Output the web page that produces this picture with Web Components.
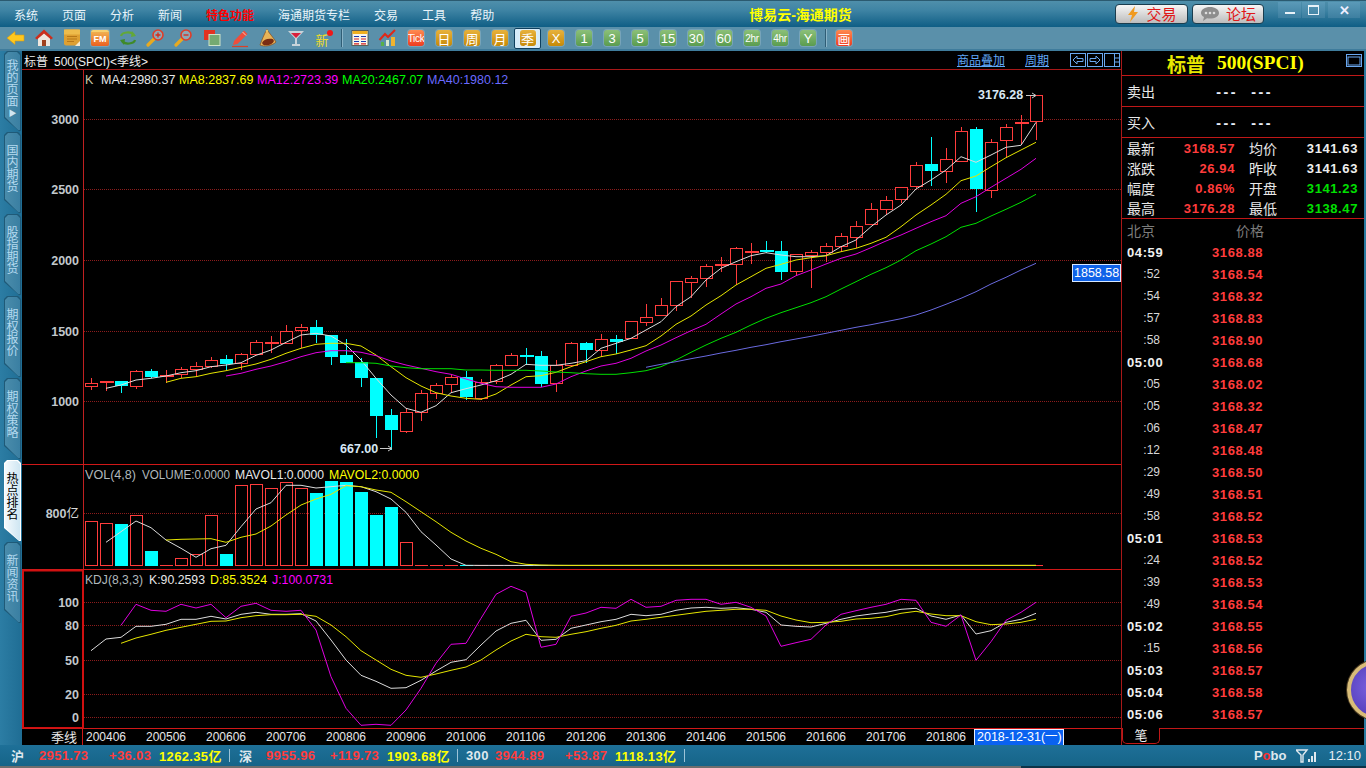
<!DOCTYPE html>
<html lang="zh"><head><meta charset="utf-8"><title>博易云</title>
<style>
html,body{margin:0;padding:0;background:#000;overflow:hidden}
body{font-family:"Liberation Sans","Noto Sans CJK SC",sans-serif}
</style></head><body>
<x-app></x-app>
<script>
const CJK='"Noto Sans CJK SC"';
const SANS='"Liberation Sans","Noto Sans CJK SC",sans-serif';
const MONO='"DejaVu Sans Mono","Noto Sans CJK SC",monospace';
const NUM=`font:700 13px ${SANS};letter-spacing:.6px`;
function def(name,css,html){
  customElements.define(name,class extends HTMLElement{
    connectedCallback(){
      if(this.shadowRoot)return;
      const r=this.attachShadow({mode:'open'});
      const h=typeof html==='function'?html(this):html;
      r.innerHTML='<style>'+css+'</style>'+h;
    }
  });
}

/* ---------- title bar ---------- */
const bolt='<svg width="14" height="16" viewBox="0 0 14 16"><path d="M9 0 L2 9 H6 L4 16 L12 6 H8 Z" fill="#f09a20"/></svg>';
const bubble='<svg width="20" height="16" viewBox="0 0 20 16"><path d="M10 1 C15 1 19 3.500 19 7 C19 10.500 15 12.500 10 12.500 C9 12.500 8 12.400 7 12.200 L3 15 L4 11 C2 10 1 8.500 1 7 C1 3.500 5 1 10 1Z" fill="#8d8d8d"/><circle cx="6" cy="7" r="1.300" fill="#ddd"/><circle cx="10" cy="7" r="1.300" fill="#ddd"/><circle cx="14" cy="7" r="1.300" fill="#ddd"/></svg>';
def('x-titlebar',`
:host{display:flex;align-items:center;height:27px;box-sizing:border-box;border-top:1px solid #2b5a70;
 background:linear-gradient(#4f8fab,#3f84a4 35%,#0f5e85);font:12px ${SANS};color:#e8f4fa;padding-left:14px;flex:none}
nav{display:flex;gap:24px}
nav span{white-space:nowrap}
.hot{color:#f00;font-weight:700}
.ttl{margin-left:255px;color:#ff0;font:700 14px ${SANS};white-space:nowrap;width:112px}
.right{margin-left:auto;display:flex;align-items:flex-start;height:100%}
.btn{width:73px;height:20px;margin:3px 4px 0 0;box-sizing:border-box;border:1px solid #1b3d4e;border-radius:4px;
 background:linear-gradient(#f6f6f6,#bcbcbc);display:flex;align-items:center;justify-content:center;gap:6px;color:#e01818;font:15px ${CJK};line-height:18px}
.win{width:23px;height:16px;margin:1px 0 0 1px;background:linear-gradient(#5b9ab8,#3d7fa0);display:flex;align-items:center;justify-content:center;color:#eef;}
.win.first{margin-left:14px}
.win.x{width:32px;margin-left:3px;margin-right:6px;font:700 13px ${SANS}}
.min{width:10px;height:2px;background:#e8f2f8;margin-top:6px}
.max{width:9px;height:7px;border:1px solid #e8f2f8;border-top-width:2px}
`,`<nav><span>系统</span><span>页面</span><span>分析</span><span>新闻</span><span class="hot">特色功能</span><span>海通期货专栏</span><span>交易</span><span>工具</span><span>帮助</span></nav>
<div class="ttl">博易云-海通期货</div>
<div class="right"><div class="btn">${bolt}<span>交易</span></div><div class="btn" style="margin-right:0;width:72px">${bubble}<span>论坛</span></div>
<div class="win first"><i class="min"></i></div><div class="win"><i class="max"></i></div><div class="win x">✕</div></div>`);

/* ---------- toolbar ---------- */
const icons={
 back:'<path d="M1 10 L9 3.500 V7 H18 V13 H9 V16.500Z" fill="#ffc81e" stroke="#d99a10" stroke-width=".6"/>',
 home:'<path d="M4 10 L10 5 L16 10 V18 H4Z" fill="#efe6de"/><rect x="8" y="12" width="4" height="6" fill="#a0401e"/><path d="M10 1.500 L1 10 L3 11.500 L10 5.500 L17 11.500 L19 10Z" fill="#cc2e1c"/>',
 book:'<rect x="2" y="1.500" width="16" height="16" rx="2" fill="#dea032"/><rect x="2" y="1.500" width="16" height="5" fill="#eebc4c"/><path d="M5 8.500H15M5 11H15M5 13.500H12" stroke="#b87818" stroke-width="1"/><path d="M13 18 L18 13 V18Z" fill="#f4ead0"/>',
 recycle:'<path d="M3 8 C4 4 13 3 16 7" fill="none" stroke="#62a838" stroke-width="2.200"/><path d="M14 3 L18 8 L13 9Z" fill="#62a838"/><path d="M17 12 C16 16 7 17 4 13" fill="none" stroke="#3f8a28" stroke-width="2.200"/><path d="M6 17 L2 12 L7 11Z" fill="#3f8a28"/>',
 zin:'<path d="M8 11 L2 17" stroke="#e8aa20" stroke-width="3.200" stroke-linecap="round"/><circle cx="12" cy="7" r="5" fill="#f4d8c8" fill-opacity=".35" stroke="#e03c28" stroke-width="1.600"/><path d="M9.500 7H14.500M12 4.500V9.500" stroke="#d82818" stroke-width="1.300"/>',
 zout:'<path d="M8 11 L2 17" stroke="#e8aa20" stroke-width="3.200" stroke-linecap="round"/><circle cx="12" cy="7" r="5" fill="#f4d8c8" fill-opacity=".35" stroke="#e03c28" stroke-width="1.600"/><path d="M9.500 7H14.500" stroke="#d82818" stroke-width="1.300"/>',
 layers:'<rect x="2" y="2" width="11" height="10" fill="#e23222"/><rect x="7" y="6.500" width="11" height="11" fill="#75aa72" stroke="#cfe4c8" stroke-width="1"/>',
 pen:'<path d="M4 13 L14 2.500 L17.500 6 L7.500 16 L3 17Z" fill="#ee4e3c"/><path d="M12.500 4 L16 7.500" stroke="#f8c8b8"/><path d="M2 18.500H18" stroke="#d84028" stroke-width="1.200"/>',
 bell:'<path d="M9 1.500 C11 5 15 9 18 14 C14 18 6 19 2 17 C4 12 6 6 9 1.500Z" fill="#e8b458" stroke="#8a4a18" stroke-width=".7"/><ellipse cx="10" cy="14" rx="6" ry="3" fill="#7a2c12" transform="rotate(-15 10 14)"/><circle cx="9" cy="3" r="1.200" fill="#e8c060"/>',
 glass:'<path d="M2 3 H18 L11 10.500 V16 H14 V18 H6 V16 H9 V10.500Z" fill="#c8d4da"/><path d="M5 5 H15 L10 10Z" fill="#d8203c"/>',
 table:'<rect x="2" y="2.500" width="16" height="15" fill="#f8f6ec" stroke="#4a4a3a" stroke-width=".8"/><rect x="2.500" y="3" width="15" height="3" fill="#f0b020"/><path d="M4 8.500H9M11 8.500H16" stroke="#1a3ab0" stroke-width="1.200"/><path d="M4 11H9M11 11H16" stroke="#d82020" stroke-width="1.200"/><path d="M4 13.500H9M11 13.500H16" stroke="#1a3ab0" stroke-width="1.200"/><path d="M4 15.800H9M11 15.800H16" stroke="#d82020" stroke-width="1.200"/>',
 rise:'<rect x="3" y="14" width="3" height="4" fill="#58b048"/><rect x="8" y="12" width="3" height="6" fill="#d8e8d0"/><rect x="13" y="9" width="4" height="9" fill="#f0b430"/><path d="M1.500 12 L7 6 L10 9 L17 2" fill="none" stroke="#e02818" stroke-width="2"/>'
};
def('x-tool',`
:host{width:28px;height:23px;flex:none;display:flex;align-items:center;justify-content:center;box-sizing:border-box}
:host([on]){background:#d6ecfa;border:1px solid #0e3f5e;border-radius:2px;height:21px;width:27px;margin-right:1px}
svg{display:block}
.b{width:16px;height:16px;border-radius:3px;display:flex;align-items:center;justify-content:center;color:#fff;font:13px ${SANS};box-shadow:0 0 0 1px rgba(255,255,255,.18);white-space:nowrap;overflow:hidden}
.g{background:linear-gradient(#e8b23c,#c68a08)}
.n{background:linear-gradient(#8cc078,#5a9c50)}
.r{background:linear-gradient(#ff8a50,#ee3c20);}
.t{font:10px ${SANS};letter-spacing:-.3px}
.fm{background:linear-gradient(#f0b050,#ec6020);width:18px;height:16px;font:700 9px ${SANS};border-top:2px solid #f6d070;box-sizing:border-box;border-radius:2px}
.xin{color:#f0dc28;font:13px ${CJK};position:relative;top:1px}
.dot{width:6px;height:6px;border-radius:50%;background:#f01818;margin:-10px 0 0 -2px}
`,t=>{
 const k=t.getAttribute('k'),c=t.getAttribute('c'),x=t.textContent;
 if(k==='xin')return '<span class="xin">新</span><i class="dot"></i>';
 if(k==='fm')return '<div class="b fm">FM</div>';
 if(k)return `<svg width="20" height="20" viewBox="0 0 20 20">${icons[k]}</svg>`;
 return `<div class="b ${c}${x==='Tick'||x==='2hr'||x==='4hr'?' t':''}">${x}</div>`;
});
def('x-toolbar',`
:host{display:flex;align-items:center;height:22px;background:#5a90aa;padding:0 0 0 2px;flex:none;border-bottom:2px solid #3f7c9c}
i{display:block;width:2px;height:18px;background:#2f5d75;margin:0 3px;border-right:1px solid #8ab4c8;box-sizing:border-box}
`,`<x-tool k="back"></x-tool><x-tool k="home"></x-tool><x-tool k="book"></x-tool><x-tool k="fm"></x-tool><x-tool k="recycle"></x-tool><x-tool k="zin"></x-tool><x-tool k="zout"></x-tool><x-tool k="layers"></x-tool><x-tool k="pen"></x-tool><x-tool k="bell"></x-tool><x-tool k="glass"></x-tool><x-tool k="xin"></x-tool><i></i>
<x-tool k="table"></x-tool><x-tool k="rise"></x-tool><x-tool c="r">Tick</x-tool><x-tool c="g">日</x-tool><x-tool c="g">周</x-tool><x-tool c="g">月</x-tool><x-tool c="g" on>季</x-tool><x-tool c="g">X</x-tool>
<x-tool c="n">1</x-tool><x-tool c="n">3</x-tool><x-tool c="n">5</x-tool><x-tool c="n">15</x-tool><x-tool c="n">30</x-tool><x-tool c="n">60</x-tool><x-tool c="n">2hr</x-tool><x-tool c="n">4hr</x-tool><x-tool c="n">Y</x-tool><i></i><x-tool c="r">画</x-tool>`);

/* ---------- side tabs ---------- */
const tabClip='polygon(0 3px,3px 0,calc(100% - 3px) 0,100% 3px,100% 100%,calc(100% - 2px) 100%,0 calc(100% - 13px))';
def('x-sidetab',`
:host{display:block;width:17px;height:81px;margin:0 0 1px 4px;background:#1f5a78;clip-path:${tabClip};padding:1px;box-sizing:border-box;flex:none}
:host([more]){height:80px}
div{height:100%;clip-path:${tabClip};background:linear-gradient(90deg,#4a8cab,#3a7fa2);color:#b4daf0;box-sizing:border-box;padding-top:11px;display:flex;flex-direction:column;align-items:center;gap:3px}
:host([more]) div{padding-top:7px}
span{writing-mode:vertical-rl;font:12px/13px ${CJK};white-space:nowrap;}
:host([on]){background:#fff}
:host([on]) div{background:linear-gradient(90deg,#f4fafd,#cfe6f2);color:#000}
b{font-size:8px;line-height:8px;color:#cfe6f2}
`,t=>`<div><span>${t.textContent.trim()}</span>${t.hasAttribute('more')?'<b>▶</b>':''}</div>`);
def('x-sidetabs',`
:host{display:flex;flex-direction:column;width:22px;flex:none;background:linear-gradient(90deg,#2c7da4,#1f6d94)}
`,`<x-sidetab more>我的页面</x-sidetab><x-sidetab>国内期货</x-sidetab><x-sidetab>股指期货</x-sidetab><x-sidetab>期权报价</x-sidetab><x-sidetab>期权策略</x-sidetab><x-sidetab on>热点排名</x-sidetab><x-sidetab>新闻资讯</x-sidetab>`);

/* ---------- chart data (page pixels) ---------- */
const R='#ff3c3c',C='#00ffff';
const CX=i=>91+15*i;
const K=[['r',378,383.3,386.7,390],['r',381,381,383.3,390.7],['c',381,381,386,393],['r',370,371,385.7,388.7],['c',369.3,371,377.3,378.3],['r',370,374.7,377,382.7],['r',366.7,369.3,374.7,378],['r',361.7,366,369.3,376.7],['r',357,360.3,366,368],['c',355,359,364,370],['r',352.7,354.3,363.3,370],['r',340,342.3,354.7,354.7],['r',336,342,343,352.7],['r',325,330.7,342.7,342.7],['r',324,327.3,330.7,348.3],['c',320,327,335.3,343.3],['c',335,335,356.7,365],['c',339.3,355,362.7,362.7],['c',358.3,362.3,378.7,386.7],['c',378,378,415.7,438.3],['c',409,415.3,430.7,450],['r',408.3,412,430.7,432.7],['r',390,393.3,412.3,420.7],['r',383.3,385.3,393.3,399],['r',375,377.3,384.7,393.3],['c',370.7,377,397.3,400],['r',379.3,381.7,397.3,400],['r',364,365.3,381.7,384],['r',352.7,355.3,365.7,365.7],['c',348.3,355,356,365],['c',351,356,383.7,387.3],['r',360,365.3,383.3,392],['r',342.3,343.3,365,366.7],['c',342.3,343.3,350.7,363.3],['r',334,339.3,350.3,356.7],['c',335,339,342,354.3],['r',321.3,321.3,338,338],['r',304,316.7,321.3,326],['r',298.3,305.3,315.7,315.7],['r',281.3,281.3,305.3,310.7],['r',276,278.3,282.3,297.7],['r',264,266.3,278.7,286.7],['r',257.3,264.3,265.6,272],['r',247.3,248.3,264.7,285.3],['r',243.3,250.7,252.3,263.7],['c',241,250.3,252,253.3],['c',241,251,271.7,280],['r',254.3,254.3,271.7,275.7],['r',250,252.3,255.7,287.7],['r',243.3,246.3,252.7,261.7],['r',233.3,236.3,246.7,251.7],['r',221,226.3,237.7,247.7],['r',203.3,209.3,224.7,225],['r',196,200.3,209.3,215],['r',187.3,187.3,199.3,203.3],['r',162,165.3,186.7,187.7],['c',136.7,164,171,186],['r',148.3,159.3,171.7,182.7],['r',127.3,131.3,161.7,161.7],['c',127,129,189,212],['r',139.3,142.3,190.3,197.7],['r',124,127.3,140.7,158.3],['r',115,122.3,123.5,145],['r',95.3,95.3,121.7,140]];
const z7=a=>a.map(Y=>310+Y/3), z8=a=>a.map(Y=>90+Y/3), zk=a=>a.map(Y=>565+Y/3);
const ser=(start,ys)=>ys.map((y,n)=>`${CX(start+n)},${y.toFixed(1)}`).join(' ');
const MA=[
 ['#dcdcdc',1,[...z7([235,225,210,205,198,188,182,170,165,158,136,120,97,75,70,78,105,150,205,255,295,307,287,248,236,225,212,193,163,166,166]),...z8([820,812,775,760,745,720,695,650,620,570,535,515,497,488,495,500,500,497,470,450,410,375,345,297,270,240,200,217,195,172,166,97])]],
 ['#e6e600',5,[...z7([217,205,200,190,182,172,162,148,130,115,103,100,100,108,135,170,203,228,248,258,265,268,252,225,200,197,187]),...z8([830,815,800,792,780,767,738,703,678,645,617,585,560,535,523,510,503,497,485,475,460,442,410,375,345,313,272,258,230,203,180,157])]],
 ['#e000e0',9,[...z7([198,190,178,168,155,140,128,122,122,127,137,153,165,175,185,193,207,220,230,232,232,232,222]),...z8([860,843,828,820,805,783,765,743,722,703,672,642,620,595,582,557,540,522,505,492,473,453,435,415,395,377,340,320,292,265,238,205])]],
 ['#00e000',17,[...z7([158,158,160,168,173,176,176,176,180,180,181,181,181,183,186]),...z8([848,851,853,853,848,842,830,810,787,765,745,727,705,685,668,653,638,620,597,575,553,533,510,482,462,440,412,400,378,358,337,313])]],
 ['#6a6ae0',37,z8([832,823,815,806,798,789,781,772,764,755,747,739,730,721,712,704,695,686,675,660,643,625,605,582,562,540,520])]
];
const VB=[634,640,642,616,723,766,745,733,616,732,526,523,535,517,535,549,513,517,546,615,591,697];
const vm1=z7([697,665,633,653,690,715,742,716,706,650,597,578,526,526,534,530,526,530,545,567,607,665,705,747,766]);
while(vm1.length<63)vm1.push(565.4);
const vm2=z7([690,688,687,686,697,682,672,648,615,585,567,553,527,530,540,547,575,605,635,667,693,715,733,755,763,765,766]);
while(vm2.length<59)vm2.push(565.4);
const KK=[...zk([257,222,217,184,184,178,163,163,154,162,148,142,148,148,146,168,225,285,331,349,370,368,346,318,292,284,240,198,175,166,226,223]),...zk([190,180,170,163,148,152,148,136,129,127,130,128,133,142,180,184,186,175,163,153,147,142,133,130,153,163,150,207,197,172,163,145])];
const KD=[...zk([235,219,208,196,187,178,169,168,158,152,149,149,148,154,180,215,257,285,313,331,337,327,316,306,285,255,228,208,215,217]),...zk([208,200,190,181,168,163,157,151,145,139,136,133,133,136,153,165,173,172,169,162,160,155,145,139,147,152,152,170,179,177,172,163])];
const KJ=[...zk([181,118,136,139,118,129,118,158,124,115,136,139,136,195,335,430,481,478,481,435,370,295,238,235,160,88,64,82,247,238]),...zk([154,144,127,130,103,127,124,106,103,103,118,112,127,153,244,233,223,180,148,137,127,118,103,106,172,184,150,286,230,166,142,112])];

const poly=(col,pts)=>`<polyline points="${pts}" fill="none" stroke="${col}" stroke-width="1"/>`;
const grid=(y,x2=1122)=>`<line x1="84" x2="${x2}" y1="${y+.5}" y2="${y+.5}" stroke="#8c1c1c" stroke-dasharray="1 1" shape-rendering="crispEdges"/>`;
const yl=(y,t,x=79)=>`<text class="ax" x="${x}" y="${y+5}" text-anchor="end">${t}</text>`;
const leg=(y,items)=>items.map(([x,c,t,w])=>`<text class="lg" x="${x}" y="${y}" fill="${c}"${w?` textLength="${w}" lengthAdjust="spacingAndGlyphs"`:''}>${t}</text>`).join('');
const snap=v=>Math.round(v)+.5;

function candles(){
 return K.map((k,i)=>{
  const x=CX(i),col=k[0]==='r'?R:C,t=k[2],b=k[3];
  let s=`<line x1="${x+.5}" x2="${x+.5}" y1="${k[1]}" y2="${k[4]}" stroke="${col}" shape-rendering="crispEdges"/>`;
  if(b-t<2.5){s+=`<rect x="${x-6}" y="${Math.round(t)}" width="14" height="2" fill="${col}" shape-rendering="crispEdges"/>`;}
  else if(k[0]==='c'){s+=`<rect x="${x-6}" y="${Math.round(t)}" width="13" height="${Math.round(b-t)}" fill="${C}" shape-rendering="crispEdges"/>`;}
  else{s+=`<rect x="${x-5.5}" y="${snap(t)}" width="12" height="${Math.round(b-t)}" fill="#000" stroke="${R}" stroke-width="1" shape-rendering="crispEdges"/>`;}
  return s;
 }).join('');
}
function bars(){
 return K.map((k,i)=>{
  const x=CX(i),col=k[0]==='r'?R:C;
  if(i>=VB.length||VB[i]>=764)return `<line x1="${x-6}" x2="${x+7}" y1="565.5" y2="565.5" stroke="${col}" shape-rendering="crispEdges"/>`;
  const t=310+VB[i]/3;
  if(k[0]==='c')return `<rect x="${x-6}" y="${Math.round(t)}" width="13" height="${566-Math.round(t)}" fill="${C}" shape-rendering="crispEdges"/>`;
  return `<rect x="${x-5.5}" y="${snap(t)}" width="12" height="${565-Math.round(t)}" fill="none" stroke="${R}" shape-rendering="crispEdges"/>`;
 }).join('');
}
const svgCss=`
:host{display:block;flex:none;background:#000}
svg{display:block}
.ax{font:700 12.5px ${SANS};fill:#c2c8cc}
.lg{font:12.5px ${SANS}}
.pk{font:700 12.5px ${SANS};fill:#d8e8f4}
`;
def('x-pricepane',svgCss+':host{height:394px;border-bottom:1px solid #d01818}',()=>`<svg width="1099" height="394" viewBox="22 70 1099 394">
<line x1="83.5" x2="83.5" y1="70" y2="464" stroke="#c02020"/>
${[119,189,260,331,401].map(y=>grid(y)).join('')}
${yl(119,3000)}${yl(189,2500)}${yl(260,2000)}${yl(331,1500)}${yl(401,1000)}
${leg(84,[[85,'#c8c8a8','K'],[101,'#e8e8e8','MA4:2980.37'],[179,'#ffff00','MA8:2837.69'],[257,'#ff00ff','MA12:2723.39'],[342,'#00ff00','MA20:2467.07'],[427,'#6a6aff','MA40:1980.12']])}
${candles()}
${MA.map(m=>poly(m[0],ser(m[1],m[2]))).join('')}
<text class="pk" x="978" y="99">3176.28</text><path d="M1026 95.500H1035M1032 93L1036 95.500L1032 98" stroke="#c8c8c8" fill="none"/>
<text class="pk" x="340" y="453">667.00</text><path d="M380 448.500H391M388 446L392 448.500L388 451" stroke="#c8c8c8" fill="none"/>
<rect x="1072.500" y="264.500" width="48" height="17" fill="#0f62e8" stroke="#d8e8ff"/><text x="1074" y="277" font-family="Liberation Sans" font-size="12.500" fill="#fff">1858.58</text>
</svg>`);
def('x-volpane',svgCss+':host{height:104px;border-bottom:1px solid #d01818}',()=>`<svg width="1099" height="104" viewBox="22 465 1099 104">
<line x1="83.5" x2="83.5" y1="465" y2="569" stroke="#c02020"/>
${grid(513)}${yl(513,'800<tspan font-weight="400" fill="#d8d8d8">亿</tspan>')}
${leg(479,[[85,'#b0b8bc','VOL(4,8)',51],[142,'#b0b8bc','VOLUME:0.0000',88],[235,'#e8e8e8','MAVOL1:0.0000',89],[329,'#ffff00','MAVOL2:0.0000',90]])}
${bars()}
${poly('#dcdcdc',ser(1,vm1))}${poly('#e6e600',ser(5,vm2))}
</svg>`);
def('x-kdjpane',svgCss+`:host{height:158px;border-bottom:1px solid #d01818}`,()=>`<svg width="1099" height="158" viewBox="22 570 1099 158">
<rect x="23" y="570.500" width="60" height="157.500" fill="none" stroke="#d01010" stroke-width="2"/>
${[602,625,660,694,717].map(y=>grid(y)).join('')}
${yl(602,100)}${yl(625,80)}${yl(660,50)}${yl(694,20)}${yl(717,0)}
${leg(584,[[85,'#b0b8bc','KDJ(8,3,3)',58],[149,'#e8e8e8','K:90.2593',56],[210,'#ffff00','D:85.3524',57],[272,'#ff00ff','J:100.0731',61]])}
${poly('#dcdcdc',ser(0,KK))}${poly('#e6e600',ser(2,KD))}${poly('#e000e0',ser(2,KJ))}
</svg>`);
def('x-timeaxis',`
:host{display:flex;height:16px;background:#000;flex:none;color:#e8e8e8;font:12px ${SANS}}
.n{width:61px;box-sizing:border-box;border-right:1px solid #d01818;text-align:right;padding-right:5px;font:13px/16px ${CJK};margin-right:3px}
.t{width:60px;line-height:16px;}
.cur{margin-left:-12px;width:90px;box-sizing:border-box;background:#0a62f0;border:1px solid #e8f0ff;border-bottom:0;color:#fff;font:12.5px/15px ${SANS};white-space:nowrap;overflow:hidden;padding-left:2px}
`,()=>`<div class="n">季线</div>${[200406,200506,200606,200706,200806,200906,201006,201106,201206,201306,201406,201506,201606,201706,201806].map(t=>`<div class="t">${t}</div>`).join('')}<div class="cur">2018-12-31(一)</div>`);

/* ---------- chart column ---------- */
const arrowBtn=d=>`<svg width="16" height="14" viewBox="0 0 16 14"><rect x=".5" y=".5" width="15" height="13" fill="none" stroke="#6aa8f0"/>${d}</svg>`;
def('x-charthead',`
:host{display:flex;align-items:center;height:18px;border-bottom:1px solid #a81818;background:#000;color:#eee;font:12px ${SANS};padding-left:2px;flex:none}
.sym{white-space:nowrap}
.sym i{font-style:normal;margin-right:6px}
.a{color:#60a8f8;text-decoration:underline;font:12px ${CJK};white-space:nowrap;line-height:16px}
.links{margin-left:auto;display:flex;gap:20px;margin-right:21px}
.b{display:flex;gap:1px;margin-right:1px}
svg{display:block}
`,()=>`<span class="sym"><i>标普</i>500(SPCI)&lt;季线&gt;</span><div class="links"><span class="a">商品叠加</span><span class="a">周期</span></div>
<div class="b">${arrowBtn('<path d="M3 7 L7 3 V5.500 H13 V8.500 H7 V11Z" fill="none" stroke="#6aa8f0"/>')}${arrowBtn('<path d="M13 7 L9 3 V5.500 H3 V8.500 H9 V11Z" fill="none" stroke="#6aa8f0"/>')}${arrowBtn('<path d="M10.500 1V13M10.500 5H15M10.500 9H15" stroke="#6aa8f0" fill="none"/>')}</div>`);
def('x-chart',`
:host{display:flex;flex-direction:column;width:1099px;flex:none;border-right:1px solid #a81818;background:#000}
`,`<x-charthead></x-charthead><x-pricepane></x-pricepane><x-volpane></x-volpane><x-kdjpane></x-kdjpane><x-timeaxis></x-timeaxis>`);

/* ---------- quote panel ---------- */
const TICKS=[['04:59','3168.88'],[':52','3168.54'],[':54','3168.32'],[':57','3168.83'],[':58','3168.90'],['05:00','3168.68'],[':05','3168.02'],[':05','3168.32'],[':06','3168.47'],[':12','3168.48'],[':29','3168.50'],[':49','3168.51'],[':58','3168.52'],['05:01','3168.53'],[':24','3168.52'],[':39','3168.53'],[':49','3168.54'],['05:02','3168.55'],[':15','3168.56'],['05:03','3168.57'],['05:04','3168.58'],['05:06','3168.57']];
const qrow=(a,b,bc,c,d,dc)=>`<div class="q"><span class="l">${a}</span><span class="v" style="color:${bc}">${b}</span><span class="l m">${c}</span><span class="v" style="color:${dc}">${d}</span></div>`;
def('x-quote',`
:host{display:flex;flex-direction:column;width:242px;flex:none;background:#000;color:#e8e8e8;font:14px ${CJK}}
.head{height:24px;display:flex;align-items:center;border-bottom:1px solid #c01818;padding-left:45px;flex:none}
.head b{font:700 19px ${CJK};margin-right:12px;color:#e8e800;}
.head span{font:700 19.5px "Liberation Serif",serif;color:#ffff00;white-space:nowrap}
.head svg{margin-left:auto;margin-right:2px;margin-top:-6px}
.ba{height:30px;display:flex;align-items:center;border-bottom:1px solid #c01818;padding-left:5px;flex:none}
.ba span{width:88px}
.ba b{font:700 12px ${MONO};color:#e8ecf8;width:35px;margin-top:3px}
.q{display:grid;grid-template-columns:27px 81px 27px 1fr;align-items:center;height:20px;padding:0 6px 0 5px}
.l{white-space:nowrap}
.m{margin-left:14px;}
.v{${NUM};text-align:right;white-space:nowrap}
.stats{height:80px;border-bottom:1px solid #c01818;flex:none}
.hd{display:flex;justify-content:space-between;height:22px;align-items:center;color:#7c7c7c;padding:0 100px 0 5px;flex:none}
.t{display:grid;grid-template-columns:38px 1fr;height:22px;align-items:center;padding-left:5px;flex:none}
.tm{${NUM};color:#f0f0f0;white-space:nowrap}
.tm.s{font:12px ${SANS};letter-spacing:0;color:#d8d8d8;text-align:right;padding-right:5px}
.pr{${NUM};color:#ff3c3c;padding-left:47px}
.sp{height:3px;flex:none}
.foot{display:flex;height:17px;flex:none}
.foot .tab{width:36px;height:15px;border:1px solid #c01818;border-top:0;border-radius:0 0 5px 5px;text-align:center;font:13px/14px ${CJK};color:#eee;background:#000}
.foot .fill{flex:1;border-top:1px solid #c01818;height:0}
`,()=>`<div class="head"><b>标普</b><span>500(SPCI)</span><svg width="16" height="13" viewBox="0 0 16 13"><rect x=".5" y=".5" width="15" height="12" fill="none" stroke="#6aa8f0"/><rect x="2" y="3" width="12" height="8" fill="none" stroke="#6aa8f0"/></svg></div>
<div class="ba"><span>卖出</span><b>---</b><b>---</b></div><div class="ba"><span>买入</span><b>---</b><b>---</b></div>
<div class="stats">${qrow('最新','3168.57','#ff3c3c','均价','3141.63','#eee')}${qrow('涨跌','26.94','#ff3c3c','昨收','3141.63','#eee')}${qrow('幅度','0.86%','#ff3c3c','开盘','3141.23','#00e000')}${qrow('最高','3176.28','#ff3c3c','最低','3138.47','#00e000')}</div>
<div class="hd"><span>北京</span><span>价格</span></div>
${TICKS.map(([a,b])=>`<div class="t"><span class="tm${a[0]===':'?' s':''}">${a}</span><span class="pr">${b}</span></div>`).join('')}
<div class="sp"></div><div class="foot"><div class="tab">笔</div><div class="fill"></div></div>`);

/* ---------- status bar ---------- */
const S=(w,c,t,f)=>`<span style="width:${w}px;color:${c};${f||''}">${t}</span>`;
const Y='#ffff00',RR='#ff3c3c',W='#dfe8ee';
def('x-status',`
:host{display:flex;align-items:center;height:21px;flex:none;background:linear-gradient(#1e7098,#166488);font:700 13px ${SANS};letter-spacing:.35px;padding-left:11px;box-sizing:border-box;white-space:nowrap}
span{display:block;flex:none}
i{display:block;width:1px;height:13px;background:#9cc4d8;flex:none}
.right{margin-left:auto;display:flex;align-items:center;padding-right:5px;font:700 13px ${SANS};letter-spacing:0;color:#dfe8ee}
.right em{font-style:normal;color:#ff3030}
.right svg{margin:0 10px 0 10px}
.right u{text-decoration:none;font:13px ${SANS};color:#e8eef2}
`,()=>S(28,W,'沪',`font:12px ${CJK}`)+S(70,RR,'2951.73')+S(50,RR,'+36.03')+S(70,Y,'1262.35亿')+'<i></i>'+S(9,W,'')+S(27,W,'深',`font:12px ${CJK}`)+S(64,RR,'9955.96')+S(57,RR,'+119.73')+S(70,Y,'1903.68亿')+'<i></i>'+S(8,W,'')+S(29,W,'300',`font:700 12px ${SANS};letter-spacing:0`)+S(70,RR,'3944.89')+S(50,RR,'+53.87')+S(69,Y,'1118.13亿')+'<i></i>'+
`<div class="right"><span>P<em>o</em>bo</span><svg width="22" height="14" viewBox="0 0 22 14"><path d="M0 1H11L7 6V13H5V6Z" fill="none" stroke="#dfe8ee" stroke-width="1.400"/><rect x="12" y="10" width="2" height="3" fill="#dfe8ee"/><rect x="15" y="7" width="2" height="6" fill="#dfe8ee"/><rect x="18" y="3" width="2" height="10" fill="#dfe8ee"/></svg><u>12:10</u></div>`);

/* ---------- app ---------- */
def('x-app',`
:host{display:flex;flex-direction:column;width:1366px;height:768px;background:#1a6a90;position:relative;overflow:hidden}
.body{display:flex;height:694px;flex:none}
.edge{width:2px;flex:none;background:#2a7ba0}
.base{height:2px;flex:none;background:linear-gradient(90deg,#6e6e6e 0,#6e6e6e 1021px,#0d3448 1021px)}
.orb{position:absolute;left:1347px;top:660px;width:60px;height:60px;border-radius:50%;box-sizing:border-box;border:4px solid #d8bc78;
 background:radial-gradient(circle at 40% 45%,#7a62e0,#5a44c0 60%,#3a2c80);box-shadow:0 0 0 1px #4a3a20}
`,`<x-titlebar></x-titlebar><x-toolbar></x-toolbar><div class="body"><x-sidetabs></x-sidetabs><x-chart></x-chart><x-quote></x-quote><div class="edge"></div></div><x-status></x-status><div class="base"></div><div class="orb"></div>`);
</script>
</body></html>
